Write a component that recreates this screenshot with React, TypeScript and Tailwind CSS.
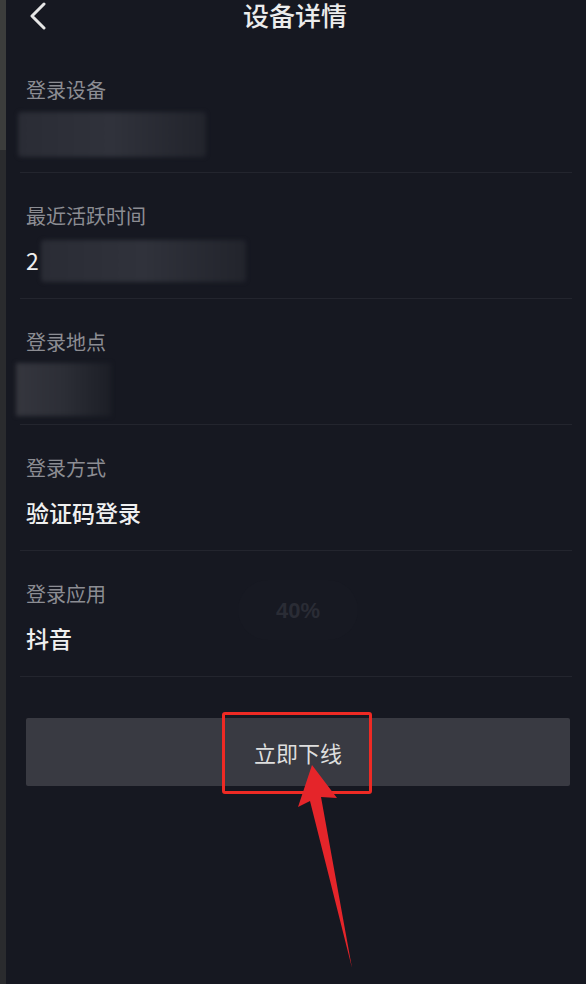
import React from "react";

const font = { fontFamily: '"Noto Sans CJK SC", "Noto Sans", sans-serif' };

function Blur({ w, h, ml }: { w: number; h: number; ml: number }) {
  return (
    <div className="h-[45px] flex items-center">
      <div
        className="bg-gradient-to-r from-[#2a2c35] via-[#30323b] to-[#22242c] blur-[2px] rounded-sm"
        style={{ width: w, height: h, marginLeft: ml }}
      />
    </div>
  );
}

function Row({ label, children }: { label: string; children: React.ReactNode }) {
  return (
    <div className="pt-[30px] pb-[15px] border-b border-[#23252e] mx-[14px]">
      <div className="pl-[6px] text-[20px] leading-[26px] text-[#8c8d93]">{label}</div>
      <div className="mt-[9px]">{children}</div>
    </div>
  );
}

export default function App() {
  return (
    <div className="w-[586px] h-[984px] bg-[#161821] flex relative overflow-hidden" style={font}>
      <div className="w-[6px] flex flex-col shrink-0">
        <div className="h-[150px] bg-[#3c3d3c]" />
        <div className="flex-1 bg-[#2a2b2e]" />
      </div>
      <div className="flex-1 flex flex-col">
        <div className="h-[46px] relative pt-[1px]">
          <svg className="absolute left-[23px] top-[2px]" width="20" height="28" viewBox="0 0 20 28">
            <path d="M15 2 L3 14 L15 26" fill="none" stroke="#e6e6e6" strokeWidth="3" strokeLinecap="round" strokeLinejoin="round" />
          </svg>
          <div className="text-center text-[26px] leading-[28px] text-[#ececec] font-medium pr-[2px]">设备详情</div>
        </div>
        <div className="mt-[1px]">
          <Row label="登录设备">
            <Blur w={188} h={45} ml={-2} />
          </Row>
          <Row label="最近活跃时间">
            <div className="h-[45px] flex items-center pl-[6px]">
              <span className="text-[23px] text-[#eeeeee]">2</span>
              <div className="ml-[2px] w-[205px] h-[42px] bg-gradient-to-r from-[#2a2c35] via-[#30323b] to-[#22242c] blur-[2px] rounded-sm" />
            </div>
          </Row>
          <Row label="登录地点">
            <div className="h-[45px] flex items-center">
              <div className="-ml-[4px] w-[95px] h-[53px] mt-[6px] bg-gradient-to-r from-[#35363e] via-[#2c2e36] to-[#1c1e26] blur-[2px]" />
            </div>
          </Row>
          <Row label="登录方式">
            <div className="h-[45px] flex items-center pl-[6px] text-[23px] font-medium text-[#f0f0f0]">验证码登录</div>
          </Row>
          <Row label="登录应用">
            <div className="h-[45px] flex items-center pl-[6px] text-[23px] font-medium text-[#f0f0f0]">抖音</div>
          </Row>
        </div>
        <div className="mt-[41px] ml-[20px] mr-[16px] h-[68px] bg-[#393a42] rounded-[2px] flex items-center justify-center">
          <span className="text-[22px] text-[#dedede]">立即下线</span>
        </div>
      </div>

      <div className="absolute left-[238px] top-[580px] w-[120px] h-[60px] rounded-full bg-[#171922] flex items-center justify-center">
        <span className="text-[22px] font-bold text-[#2a2c35]" style={{ fontFamily: '"Liberation Sans", sans-serif' }}>40%</span>
      </div>

      <div className="absolute left-[222px] top-[712px] w-[150px] h-[82px] border-[3px] border-[#ee2a24] rounded-[3px]" />

      <svg className="absolute left-0 top-0 pointer-events-none" width="586" height="984" viewBox="0 0 586 984">
        <polygon points="312,765 298,807 310,801 352,968 321,797 337,798" fill="#e5252a" />
      </svg>
    </div>
  );
}
